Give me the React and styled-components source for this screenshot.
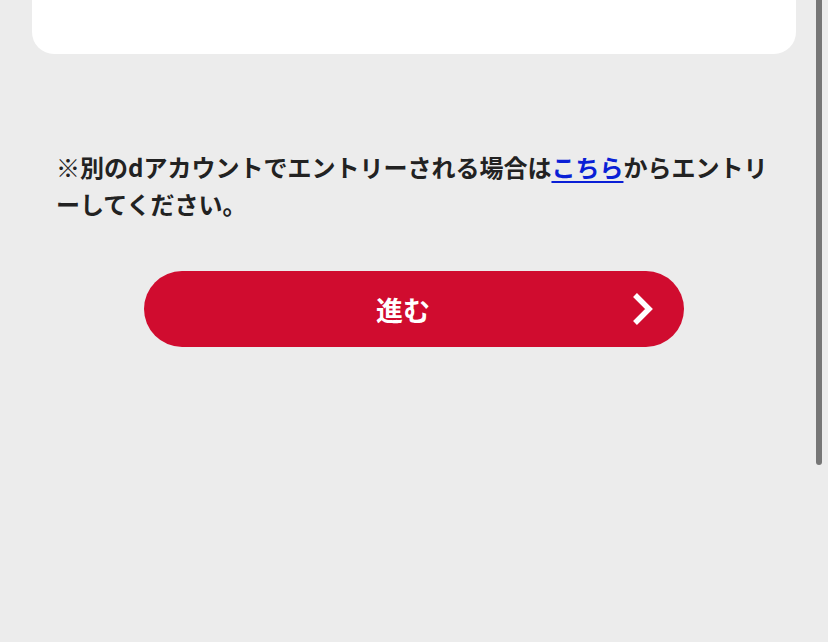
import React from 'react'
import styled, { createGlobalStyle } from 'styled-components'

const GlobalStyle = createGlobalStyle`
  html, body {
    margin: 0;
    padding: 0;
    background: #ececec;
  }
  body {
    font-family: "Noto Sans CJK JP", "Noto Sans", sans-serif;
    color: #222;
  }
`

const Page = styled.div`
  position: relative;
  min-height: 642px;
  padding: 0 32px;
  box-sizing: border-box;
  overflow: hidden;
`

const Card = styled.div`
  height: 54px;
  background: #fff;
  border-radius: 0 0 22px 22px;
`

const Notice = styled.p`
  margin: 94px 0 0;
  padding: 0 24px;
  font-size: 24px;
  font-weight: 700;
  line-height: 37px;
  line-break: loose;
  color: #222;
`

const Link = styled.a`
  color: #0a1fd6;
  text-decoration: underline;
  text-underline-offset: 4px;
  text-decoration-thickness: 2px;
`

const Actions = styled.div`
  display: flex;
  justify-content: center;
  margin-top: 49px;
`

const NextButton = styled.button`
  position: relative;
  width: 540px;
  height: 76px;
  padding: 0 22px 0 0;
  border: none;
  border-radius: 38px;
  background: #d00c2f;
  color: #fff;
  font-family: inherit;
  font-size: 27px;
  font-weight: 700;
  cursor: pointer;
  display: flex;
  align-items: center;
  justify-content: center;
`

const Chevron = styled.svg`
  position: absolute;
  right: 29px;
  top: 50%;
  transform: translateY(-50%);
`

const Scrollbar = styled.div`
  position: absolute;
  top: 0;
  right: 6px;
  width: 6px;
  height: 465px;
  border-radius: 0 0 3px 3px;
  background: #767676;
`

export default function App() {
  return (
    <>
      <GlobalStyle />
      <Page>
        <Card />
        <Notice>
          ※別のdアカウントでエントリーされる場合は<Link href="#">こちら</Link>からエントリーしてください。
        </Notice>
        <Actions>
          <NextButton>
            進む
            <Chevron width="24" height="34" viewBox="0 0 24 34">
              <path d="M4 3 L18 17 L4 31" fill="none" stroke="#fff" strokeWidth="5.5" />
            </Chevron>
          </NextButton>
        </Actions>
        <Scrollbar />
      </Page>
    </>
  )
}
